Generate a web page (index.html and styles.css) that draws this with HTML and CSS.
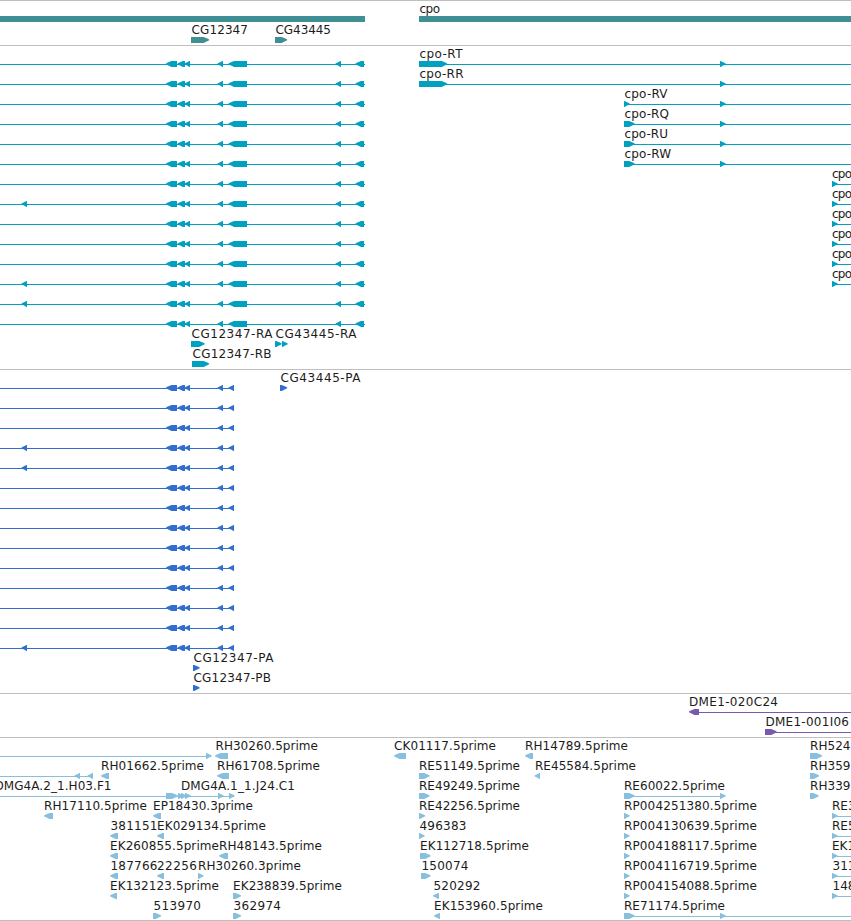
FILE: index.html
```
<!DOCTYPE html>
<html lang="en">
<head>
  <meta charset="UTF-8">
  <title>Genome Browser - cpo</title>
  <link rel="stylesheet" href="styles.css">
</head>
<body>
  <div class="browser">
    <div class="track genes"><svg id="genes"></svg></div>
    <div class="track transcripts"><svg id="transcripts"></svg></div>
    <div class="track proteins"><svg id="proteins"></svg></div>
    <div class="track clones"><svg id="clones"></svg></div>
    <div class="track ests"><svg id="ests"></svg></div>
  </div>
  <script src="tracks.js"></script>
</body>
</html>
```

FILE: styles.css
```
* {
  box-sizing: border-box;
}

body {
  margin: 0;
  background: #fff;
  overflow: hidden;
}

.browser {
  width: 851px;
  border-bottom: 1px solid #bfbfbf;
}

.track {
  border-top: 1px solid #bfbfbf;
}

.track svg {
  display: block;
  width: 100%;
  height: 100%;
  fill: currentColor;
}

.track text {
  font-family: "DejaVu Sans", sans-serif;
  font-size: 12px;
  fill: #1c1c1c;
}

.genes {
  height: 45px;
  color: #408f95;
}

.transcripts {
  height: 324px;
  color: #00a0c0;
}

.proteins {
  height: 324px;
  color: #306fd0;
}

.clones {
  height: 44px;
  color: #7859ab;
}

.ests {
  height: 183px;
  color: #88bfdf;
}
```

FILE: tracks.js
```
const NS = "http://www.w3.org/2000/svg";
const FIRST_ROW = 15;
const WIDTH = 851;

function add(track, name, attrs) {
  const el = document.createElementNS(NS, name);
  for (const key in attrs) el.setAttribute(key, attrs[key]);
  document.getElementById(track).appendChild(el);
  return el;
}

function rowTop(track, row) {
  return FIRST_ROW + row * (track === "genes" ? 21 : 20);
}

function label(track, row, text, x, end) {
  const attrs = { x: x + 0.5, y: rowTop(track, row) - 3 };
  if (end) {
    attrs.textLength = end - x;
    attrs.lengthAdjust = "spacing";
  }
  add(track, "text", attrs).textContent = text;
}

function bar(track, row, x1, x2) {
  add(track, "rect", { x: x1, y: rowTop(track, row), width: x2 - x1, height: 6 });
}

function line(track, row, x1, x2) {
  add(track, "rect", { x: x1, y: rowTop(track, row) + 3, width: x2 - x1, height: 1 });
}

// box with a pointed end, "R" points right and "L" points left
function arrow(track, row, dir, x1, x2) {
  const y = rowTop(track, row);
  const s = dir === "R" ? 1 : -1;
  const back = dir === "R" ? x1 : x2;
  const tip = dir === "R" ? x2 - 0.3 : x1 + 0.5;
  const neck = tip - s * Math.min(5.5, Math.abs(tip - back) - 0.5);
  const mid = tip - s * 2.5;
  add(track, "polygon", {
    points: `${back},${y} ${neck},${y} ${mid},${y + 1.2} ${tip},${y + 2.5} ${tip},${y + 3.3} ${mid},${y + 4.6} ${neck},${y + 6} ${back},${y + 6}`
  });
}

// genes
bar("genes", 0, 0, 365);
bar("genes", 0, 419, WIDTH);
label("genes", 0, "cpo", 419, 439.5);
label("genes", 1, "CG12347", 191, 247.5);
label("genes", 1, "CG43445", 275, 330.5);
arrow("genes", 1, "R", 191, 209.5);
arrow("genes", 1, "R", 275, 287.5);

// transcripts
for (let i = 0; i < 14; i++) {
  line("transcripts", i, 0, 365);
  [[165.5, 177], [177, 185], [184, 190], [217, 223], [228, 247], [335, 341], [355, 364]].forEach(
    ([a, b]) => arrow("transcripts", i, "L", a, b));
}
[7, 11, 12].forEach(i => arrow("transcripts", i, "L", 21, 27));

[
  ["cpo-RT", 419, 462, 447.5],
  ["cpo-RR", 419, 463, 447.5],
  ["cpo-RV", 624, 667, 630],
  ["cpo-RQ", 624, 668.5, 635],
  ["cpo-RU", 624, 667.5, 635],
  ["cpo-RW", 624, 670.5, 635]
].forEach(([name, x, end, exon], i) => {
  label("transcripts", i, name, x, end);
  line("transcripts", i, x, WIDTH);
  arrow("transcripts", i, "R", x, exon);
  arrow("transcripts", i, "R", 720, 726);
});
for (let i = 6; i < 12; i++) {
  label("transcripts", i, "cpo", 831.5, 851.5);
  line("transcripts", i, 832, WIDTH);
  arrow("transcripts", i, "R", 832, 838);
}
label("transcripts", 14, "CG12347-RA", 191, 272);
arrow("transcripts", 14, "R", 191, 205);
label("transcripts", 14, "CG43445-RA", 275, 356);
arrow("transcripts", 14, "R", 275, 282);
arrow("transcripts", 14, "R", 282, 288);
label("transcripts", 15, "CG12347-RB", 192, 271);
arrow("transcripts", 15, "R", 192, 209.5);

// proteins
for (let i = 0; i < 14; i++) {
  line("proteins", i, 0, 234);
  [[165.5, 177], [177, 185], [184, 190], [217, 223], [228, 234]].forEach(
    ([a, b]) => arrow("proteins", i, "L", a, b));
}
[3, 4, 13].forEach(i => arrow("proteins", i, "L", 21, 27));
label("proteins", 0, "CG43445-PA", 280, 360);
arrow("proteins", 0, "R", 280, 287.5);
label("proteins", 14, "CG12347-PA", 193, 273);
arrow("proteins", 14, "R", 193, 200);
label("proteins", 15, "CG12347-PB", 193, 270.5);
arrow("proteins", 15, "R", 193, 200);

// clones
label("clones", 0, "DME1-020C24", 688.5, 777.5);
line("clones", 0, 690, WIDTH);
arrow("clones", 0, "L", 688.5, 699);
label("clones", 1, "DME1-001I06", 765, 848.5);
line("clones", 1, 765, WIDTH);
arrow("clones", 1, "R", 765, 777);

// ests: row, name, label start, label end, direction, glyph start, glyph end
[
  [0, "RH30260.5prime", 215, 317.5, "L", 214.5, 228],
  [0, "CK01117.5prime", 393.5, 495.5, "L", 393.5, 406],
  [0, "RH14789.5prime", 524.5, 627.5, "L", 524.5, 533],
  [0, "RH524", 809.5, 850, "R", 810, 822.5],
  [1, "RH01662.5prime", 100.5, 203.5, "L", 100.5, 109],
  [1, "RH61708.5prime", 216.5, 319.5, "L", 216.5, 229],
  [1, "RE51149.5prime", 418.5, 519.5, "R", 419, 430],
  [1, "RE45584.5prime", 534.5, 635.5, "L", 534, 540],
  [1, "RH359", 809.5, 850, "R", 810, 819.5],
  [2, "RE49249.5prime", 418.5, 519.5, "R", 419, 430],
  [2, "RE60022.5prime", 623.5, 724.5, "R", 624, 635],
  [2, "RH339", 809.5, 850, "R", 810, 819],
  [3, "RH17110.5prime", 43.5, 146.5, "L", 43.5, 53],
  [3, "EP18430.3prime", 152.5, 252.5, "L", 152.5, 161],
  [3, "RE42256.5prime", 418.5, 519.5, "R", 419, 425.5],
  [3, "RP004251380.5prime", 623.5, 756.5, "R", 624, 630],
  [3, "RE3", 831.5, 0, "R", 832, 838],
  [4, "381151", 110, 157, "L", 109.5, 118],
  [4, "EK029134.5prime", 156.5, 265.5, "L", 156.5, 164],
  [4, "496383", 419, 466, "R", 419, 425],
  [4, "RP004130639.5prime", 623.5, 756.5, "R", 624, 630],
  [4, "RE5", 831.5, 0, "R", 832, 838],
  [5, "EK260855.5prime", 109.5, 218.5, "L", 109.5, 118],
  [5, "RH48143.5prime", 218.5, 321.5, "L", 218.5, 228],
  [5, "EK112718.5prime", 419.5, 528.5, "R", 420, 431],
  [5, "RP004188117.5prime", 623.5, 756.5, "R", 624, 630],
  [5, "EK1", 831.5, 0, "R", 832, 838],
  [6, "187766", 110, 157, "L", 109.5, 118],
  [6, "22256", 156.5, 196.5, "L", 156.5, 164],
  [6, "RH30260.3prime", 197.5, 300.5, "R", 198, 204],
  [6, "150074", 421, 468, "R", 421, 431],
  [6, "RP004116719.5prime", 623.5, 756.5, "R", 624, 630],
  [6, "311", 832, 0, "R", 832, 838],
  [7, "EK132123.5prime", 109.5, 218.5, "L", 109.5, 117],
  [7, "EK238839.5prime", 232.5, 341.5, "R", 233, 241.5],
  [7, "520292", 433, 480, "L", 432.5, 439],
  [7, "RP004154088.5prime", 623.5, 756.5, "R", 624, 630],
  [7, "148", 832, 0, "R", 832, 838],
  [8, "513970", 153, 200.5, "R", 153, 161.5],
  [8, "362974", 233, 280.5, "R", 233, 241.5],
  [8, "EK153960.5prime", 433.5, 542.5, "L", 433.5, 440],
  [8, "RE71174.5prime", 623.5, 724.5, "R", 624, 635]
].forEach(([row, name, x, end, dir, a, b]) => {
  label("ests", row, name, x, end);
  arrow("ests", row, dir, a, b);
});

line("ests", 0, 0, 211);
arrow("ests", 0, "R", 206, 212);

line("ests", 1, 0, 93);
arrow("ests", 1, "L", 74, 80);
arrow("ests", 1, "L", 87, 93);

label("ests", 2, "DMG4A.2_1.H03.F1", -6, 111);
label("ests", 2, "DMG4A.1_1.J24.C1", 180.5, 294.5);
line("ests", 2, 0, 234);
[[166, 178], [178, 184], [181, 187], [185, 191], [218, 224], [229, 235]].forEach(
  ([a, b]) => arrow("ests", 2, "R", a, b));

line("ests", 2, 624, 725);
arrow("ests", 2, "R", 720, 726);
line("ests", 8, 624, WIDTH);
arrow("ests", 8, "R", 720, 726);
for (let i = 3; i < 8; i++) line("ests", i, 832, WIDTH);
```
